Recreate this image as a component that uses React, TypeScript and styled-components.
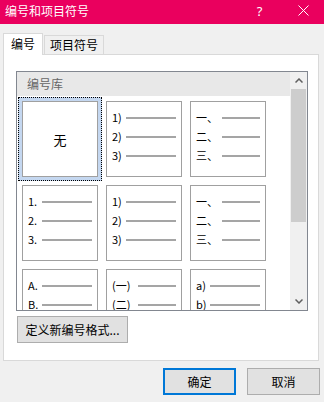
import styled, { createGlobalStyle } from 'styled-components';

const GlobalStyle = createGlobalStyle`
  body {
    margin: 0;
    background: #f0f0f0;
    font-family: "Noto Sans CJK SC", "Noto Sans", sans-serif;
  }
`;

// whole dialog window
const Dialog = styled.div`
  width: 324px;
  height: 402px;
  display: flex;
  flex-direction: column;
  background: #f0f0f0;
  overflow: hidden;
`;

// pink caption bar
const TitleBar = styled.div`
  height: 24px;
  display: flex;
  align-items: center;
  background: #ea005e;
  color: #fff;
`;

const Title = styled.div`
  flex: 1;
  padding-left: 5px;
  font-size: 12px;
  line-height: 24px;
  margin-top: -3px;
`;

const CaptionButton = styled.div<{ $w: number }>`
  width: ${p => p.$w}px;
  height: 24px;
  display: flex;
  align-items: center;
  justify-content: center;
  margin-top: -3px;
  font-family: "Noto Sans", sans-serif;
  font-size: 13px;
`;

const Body = styled.div`
  padding: 9px 0 0 3px;
`;

// tab strip
const TabBar = styled.div`
  display: flex;
  align-items: flex-end;
  position: relative;
  z-index: 1;
  margin-bottom: -1px;
`;

const Tab = styled.div<{ $active?: boolean }>`
  box-sizing: border-box;
  width: ${p => (p.$active ? 40 : 60)}px;
  height: ${p => (p.$active ? 22 : 19)}px;
  margin-left: ${p => (p.$active ? 0 : 1)}px;
  margin-bottom: ${p => (p.$active ? 0 : 1)}px;
  border: 1px solid #d9d9d9;
  border-bottom: none;
  background: ${p => (p.$active ? '#fff' : '#f0f0f0')};
  font-size: 12px;
  line-height: ${p => (p.$active ? 20 : 17)}px;
  text-align: center;
  color: #000;
`;

const Panel = styled.div`
  box-sizing: border-box;
  width: 316px;
  height: 307px;
  border: 1px solid #d9d9d9;
  background: #fff;
  padding: 16px 0 0 12px;
`;

// numbering gallery list box
const Gallery = styled.div`
  box-sizing: border-box;
  width: 292px;
  height: 240px;
  border: 1px solid #828790;
  display: flex;
  overflow: hidden;
`;

const GalleryMain = styled.div`
  flex: 1;
  display: flex;
  flex-direction: column;
  overflow: hidden;
`;

const GalleryHeader = styled.div`
  height: 24px;
  flex: none;
  background: #e8e8e8;
  color: #666;
  font-size: 12px;
  line-height: 24px;
  padding-left: 10px;
`;

const Grid = styled.div`
  display: grid;
  grid-template-columns: repeat(3, 84px);
  grid-auto-rows: 84px;
  padding: 1px 0 0 1px;
`;

const Item = styled.div<{ $selected?: boolean }>`
  box-sizing: border-box;
  padding: 3px;
  border: 1px dotted ${p => (p.$selected ? '#000' : 'transparent')};
  background: ${p => (p.$selected ? '#c4d7f0' : 'transparent')};
`;

const Preview = styled.div<{ $center?: boolean }>`
  box-sizing: border-box;
  width: 76px;
  height: 76px;
  border: 1px solid #a0a0a0;
  background: #fff;
  padding: 6px 5px 0 5px;
  display: flex;
  flex-direction: column;
  ${p => p.$center && 'align-items: center; justify-content: center; padding: 0;'}
`;

const NoneLabel = styled.span`
  font-size: 13px;
  color: #000;
`;

const Level = styled.div`
  height: 19px;
  display: flex;
  align-items: center;
`;

const Marker = styled.span<{ $w: number }>`
  width: ${p => p.$w}px;
  flex: none;
  font-size: 11px;
  line-height: 19px;
  color: #000;
  white-space: nowrap;
`;

const Rule = styled.span`
  flex: 1;
  height: 2px;
  background: #a5a5a5;
`;

const ScrollBar = styled.div`
  width: 17px;
  flex: none;
  background: #f0f0f0;
  display: flex;
  flex-direction: column;
`;

const ScrollArrow = styled.div`
  height: 17px;
  display: flex;
  align-items: center;
  justify-content: center;
`;

const ScrollThumb = styled.div`
  height: 133px;
  margin: 0 1px;
  background: #cdcdcd;
`;

const ScrollTrack = styled.div`
  flex: 1;
`;

const PushButton = styled.button<{ $default?: boolean }>`
  box-sizing: border-box;
  height: 27px;
  border: ${p => (p.$default ? '2px solid #0078d7' : '1px solid #adadad')};
  background: #e1e1e1;
  font-family: "Noto Sans CJK SC", sans-serif;
  font-size: 12px;
  color: #000;
  padding: 0;
`;

const DefineButton = styled(PushButton)`
  width: 111px;
  margin: 5px 0 0 1px;
`;

const Footer = styled.div`
  display: flex;
  justify-content: flex-end;
  gap: 11px;
  padding: 7px 4px 0 0;
`;

const FooterButton = styled(PushButton)`
  width: 73px;
`;

const Chevron = ({ up }: { up?: boolean }) => (
  <svg width="8" height="5" viewBox="0 0 8 5">
    <path
      d={up ? 'M0.5 4.5 L4 1 L7.5 4.5' : 'M0.5 0.5 L4 4 L7.5 0.5'}
      fill="none"
      stroke="#606060"
      strokeWidth="1.5"
    />
  </svg>
);

type Preset = { markers: string[]; w: number } | null;

// third row is scrolled half out of view, only its first two levels show
const presets: Preset[] = [
  null,
  { markers: ['1)', '2)', '3)'], w: 14 },
  { markers: ['一、', '二、', '三、'], w: 26 },
  { markers: ['1.', '2.', '3.'], w: 14 },
  { markers: ['1)', '2)', '3)'], w: 14 },
  { markers: ['一、', '二、', '三、'], w: 26 },
  { markers: ['A.', 'B.'], w: 14 },
  { markers: ['(一)', '(二)'], w: 26 },
  { markers: ['a)', 'b)'], w: 14 },
];

export default function App() {
  return (
    <Dialog>
      <GlobalStyle />
      <TitleBar>
        <Title>编号和项目符号</Title>
        <CaptionButton $w={45}>?</CaptionButton>
        <CaptionButton $w={42}>
          <svg width="11" height="11" viewBox="0 0 11 11">
            <path d="M0.5 0.5 L10.5 10.5 M10.5 0.5 L0.5 10.5" stroke="#fff" strokeWidth="1" />
          </svg>
        </CaptionButton>
      </TitleBar>
      <Body>
        <TabBar>
          <Tab $active>编号</Tab>
          <Tab>项目符号</Tab>
        </TabBar>
        <Panel>
          <Gallery>
            <GalleryMain>
              <GalleryHeader>编号库</GalleryHeader>
              <Grid>
                {presets.map((p, i) => (
                  <Item key={i} $selected={i === 0}>
                    {p ? (
                      <Preview>
                        {p.markers.map(m => (
                          <Level key={m}>
                            <Marker $w={p.w}>{m}</Marker>
                            <Rule />
                          </Level>
                        ))}
                      </Preview>
                    ) : (
                      <Preview $center>
                        <NoneLabel>无</NoneLabel>
                      </Preview>
                    )}
                  </Item>
                ))}
              </Grid>
            </GalleryMain>
            <ScrollBar>
              <ScrollArrow><Chevron up /></ScrollArrow>
              <ScrollThumb />
              <ScrollTrack />
              <ScrollArrow><Chevron /></ScrollArrow>
            </ScrollBar>
          </Gallery>
          <DefineButton>定义新编号格式...</DefineButton>
        </Panel>
        <Footer>
          <FooterButton $default>确定</FooterButton>
          <FooterButton>取消</FooterButton>
        </Footer>
      </Body>
    </Dialog>
  );
}
